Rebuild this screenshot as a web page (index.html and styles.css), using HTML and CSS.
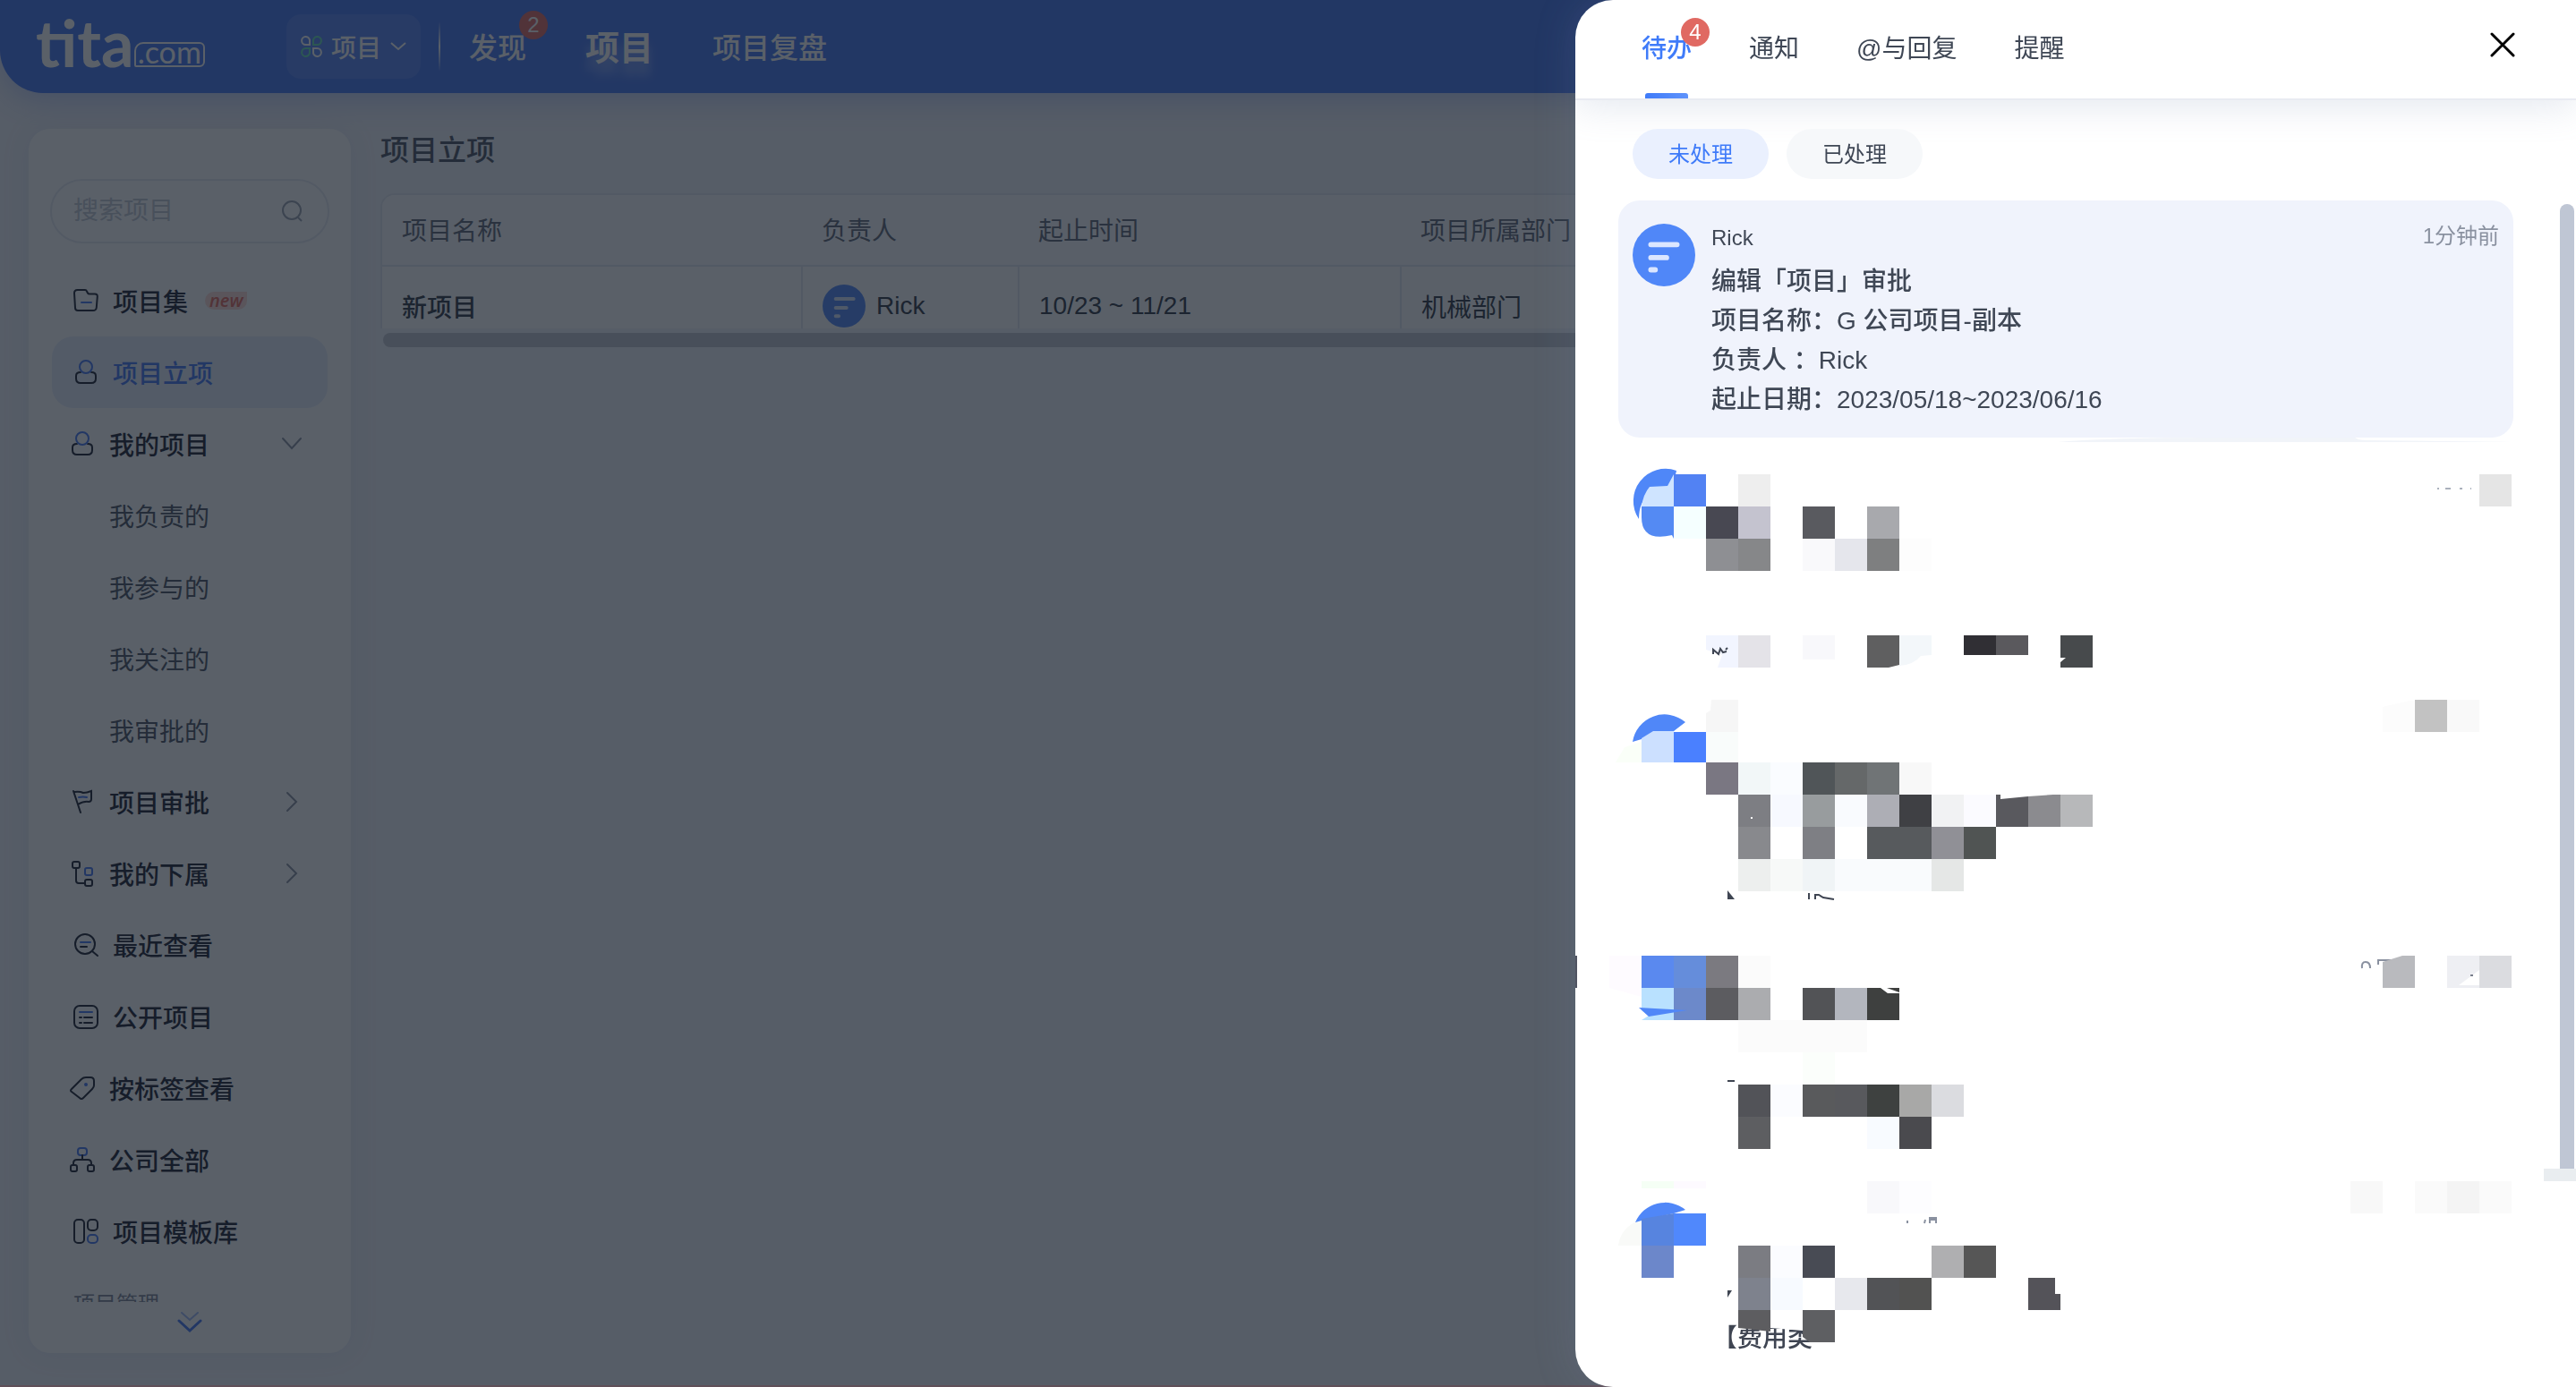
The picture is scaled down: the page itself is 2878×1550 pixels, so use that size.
FILE: index.html
```html
<!DOCTYPE html>
<html lang="zh-CN">
<head>
    <meta charset="UTF-8">
    <meta name="viewport" content="width=device-width, initial-scale=1.0">
    <title>项目立项</title>
    <link rel="stylesheet" href="styles.css">
</head>
<body>
    <div class="app">
        <header class="topbar">
            <a class="logo" href="#"><span class="logo-name">tita</span><span class="logo-com">.com</span></a>
            <button class="switcher">
                <svg width="24" height="26" viewBox="0 0 24 26" fill="none" stroke-width="2">
                    <path class="w" d="M10 11V5.500A4.500 4.500 0 1 0 5.500 11z"/>
                    <path class="g" d="M14 11V5.500A4.500 4.500 0 1 1 18.500 11z"/>
                    <path class="g" d="M10 15v5.500A4.500 4.500 0 1 1 5.500 15z"/>
                    <path class="w" d="M14 15v5.500A4.500 4.500 0 1 0 18.500 15z"/>
                </svg>
                项目
                <svg width="18" height="10" viewBox="0 0 18 10" fill="none" stroke-width="2"><path class="w" d="M1 1l8 7 8-7"/></svg>
            </button>
            <span class="divider"></span>
            <nav class="topnav">
                <a href="#">发现<span class="badge">2</span></a>
                <a href="#" class="current">项目</a>
                <a href="#">项目复盘</a>
            </nav>
        </header>

        <div class="content">
            <aside class="sidebar">
                <div class="search">
                    <input type="text" placeholder="搜索项目" aria-label="搜索项目">
                    <svg width="26" height="26" viewBox="0 0 26 26" fill="none" stroke="#9aa1b0" stroke-width="2"><circle cx="12" cy="12" r="10"/><path d="M19 20l4 4"/></svg>
                </div>
                <nav class="menu">
                    <a href="#">
                        <svg viewBox="0 0 28 28"><path d="M1 5.500Q1 2 4.500 2h8.500q1.500 0 2 1.500l1 2q.5 1 2 1H24q3 0 2.800 3l-1 12q-.3 3.500-3.800 3.500H5q-3 0-3-3z"/><path class="b" d="M9 16h11"/></svg>
                        项目集 <span class="new">new</span>
                    </a>
                    <a href="#" class="active">
                        <svg viewBox="0 0 28 28"><path d="M8 14q-5 0-5 4v3q0 5 5 5h12q5 0 5-5v-3q0-4-5-4"/><circle class="b" cx="14" cy="8" r="7"/></svg>
                        项目立项
                    </a>
                    <a href="#" class="group">
                        <svg viewBox="0 0 28 28"><path d="M8 14q-5 0-5 4v3q0 5 5 5h12q5 0 5-5v-3q0-4-5-4"/><circle class="b" cx="14" cy="8" r="7"/></svg>
                        我的项目
                        <svg class="arrow" viewBox="0 0 28 28"><path d="M4 8l10 11L24 8"/></svg>
                    </a>
                    <a href="#" class="child">我负责的</a>
                    <a href="#" class="child">我参与的</a>
                    <a href="#" class="child">我关注的</a>
                    <a href="#" class="child">我审批的</a>
                    <a href="#" class="group">
                        <svg viewBox="0 0 28 28"><path d="M4 2l8 24M5 3q6-1 10 1 4 0 9-2v9q0 3-3 3-5-1-12 3"/><path class="b" d="M10 9q5-1 9 0"/></svg>
                        项目审批
                        <svg class="arrow" viewBox="0 0 28 28"><path d="M9 4l10 10L9 24"/></svg>
                    </a>
                    <a href="#" class="group">
                        <svg viewBox="0 0 28 28"><rect x="3" y="1" width="8" height="7" rx="2"/><path d="M7 8v14q0 3 3 3h6"/><rect x="17" y="21" width="8" height="7" rx="2"/><rect class="b" x="17" y="8" width="8" height="8" rx="2"/></svg>
                        我的下属
                        <svg class="arrow" viewBox="0 0 28 28"><path d="M9 4l10 10L9 24"/></svg>
                    </a>
                    <a href="#">
                        <svg viewBox="0 0 28 28"><circle cx="13" cy="13" r="11"/><path d="M21 21l6 5"/><path class="b" d="M8 11h11"/><path d="M8 16h7"/></svg>
                        最近查看
                    </a>
                    <a href="#">
                        <svg viewBox="0 0 28 28"><rect x="1" y="2" width="26" height="25" rx="6"/><path class="b" d="M7 9h14"/><path d="M7 15h2M12 15h9M7 21h2M12 21h9"/></svg>
                        公开项目
                    </a>
                    <a href="#" class="group">
                        <svg viewBox="0 0 28 28"><path d="M2 15L13 4q2-2 5-2h5q4 0 4 4v5q0 2-2 4L15 25q-2 2-4 0l-9-7q-2-1 0-3z"/><circle class="b dot" cx="18" cy="10" r="1"/></svg>
                        按标签查看
                    </a>
                    <a href="#" class="group">
                        <svg viewBox="0 0 28 28"><rect class="b" x="9" y="1" width="10" height="8" rx="3"/><path d="M14 9v5M4 20v-2q0-4 4-4h12q4 0 4 4v2"/><rect x="1" y="20" width="7" height="7" rx="2"/><rect x="20" y="20" width="7" height="7" rx="2"/></svg>
                        公司全部
                    </a>
                    <a href="#">
                        <svg viewBox="0 0 28 28"><rect x="1" y="1" width="11" height="26" rx="4"/><rect x="16" y="1" width="11" height="12" rx="4"/><rect class="b" x="16" y="18" width="11" height="9" rx="4"/></svg>
                        项目模板库
                    </a>
                    <p class="menu-label">项目管理</p>
                </nav>
                <button class="more" aria-label="展开更多">
                    <svg width="28" height="26" viewBox="0 0 28 26" fill="none" stroke="#4475f2" stroke-linecap="round"><path d="M5 2l9 8 9-8" stroke-width="2" opacity=".5"/><path d="M2 11l12 11L26 11" stroke-width="3"/></svg>
                </button>
            </aside>

            <main class="main">
                <h1>项目立项</h1>
                <div class="table-wrap">
                    <table>
                        <thead>
                            <tr>
                                <th class="col-name">项目名称</th>
                                <th class="col-owner">负责人</th>
                                <th class="col-date">起止时间</th>
                                <th>项目所属部门</th>
                            </tr>
                        </thead>
                        <tbody>
                            <tr>
                                <td class="strong">新项目</td>
                                <td>
                                    <div class="owner">
                                        <svg width="48" height="48" viewBox="0 0 72 72"><circle cx="36" cy="36" r="36" fill="#5087f8"/><path d="M22 24h30M22 39h18M22 53h5" stroke="#dbe6ff" stroke-width="6" stroke-linecap="round"/></svg>
                                        Rick
                                    </div>
                                </td>
                                <td>10/23 ~ 11/21</td>
                                <td>机械部门</td>
                            </tr>
                        </tbody>
                    </table>
                </div>
                <div class="hscroll"></div>
            </main>
        </div>
    </div>

    <div class="mask"></div>

    <section class="drawer">
        <div class="drawer-head">
            <div class="tabs">
                <button class="selected">待办<span class="badge">4</span></button>
                <button>通知</button>
                <button>@与回复</button>
                <button>提醒</button>
            </div>
            <button class="close" aria-label="关闭">
                <svg width="28" height="28" viewBox="0 0 28 28" stroke="#000" stroke-width="3" stroke-linecap="round"><path d="M2 2l24 24M26 2L2 26"/></svg>
            </button>
        </div>
        <div class="filters">
            <button class="on">未处理</button>
            <button>已处理</button>
        </div>

        <article class="card">
            <svg class="avatar" viewBox="0 0 72 72"><circle cx="36" cy="36" r="36" fill="#5087f8"/><path d="M21 24h30M21 39h18M21 53h5" stroke="#dbe6ff" stroke-width="6" stroke-linecap="round"/></svg>
            <div class="card-body">
                <div class="card-top"><span>Rick</span><time>1分钟前</time></div>
                <p><b>编辑「项目」审批</b></p>
                <p><b>项目名称：</b>G <b>公司项目-副本</b></p>
                <p><b>负责人 ：</b>Rick</p>
                <p><b>起止日期：</b>2023/05/18~2023/06/16</p>
            </div>
        </article>

        <!-- masked messages, cells are 36px -->
        <svg class="masked" viewBox="10 489 1118 275">
            <path d="M549 494q60-5 170-5h162q4 3 12 3l164 2z" fill="#f1f4f9"/>
            <path d="M81 580a36 36 0 0 1 42-54l-4 17-26 3v5q-12 10-12 29z" fill="#4f87f8"/>
            <path d="M93 544l20-1 7-13v36H84q2-14 9-22z" fill="#cfe4ff"/>
            <path d="M84 566h36v36l-2-4q-34 8-34-20z" fill="#548af3"/>
            <path d="M120 530h36v36h-36z" fill="#5282f3"/>
            <path d="M120 566h36v36h-36z" fill="#f5ffff"/>
            <path d="M192 530h36v36h-36z" fill="#eeeeee"/>
            <path d="M1020 530h36v36h-36z" fill="#e5e5e5"/>
            <path d="M973 546h2M982 546h6M998 546h3M1010 546h1" stroke="#aab0bc" stroke-width="2"/>
            <path d="M156 566h36v36h-36z" fill="#484852"/>
            <path d="M192 566h36v36h-36z" fill="#c4c3cf"/>
            <path d="M264 566h36v36h-36z" fill="#595a5f"/>
            <path d="M336 566h36v36h-36z" fill="#a8a9ad"/>
            <path d="M156 602h36v36h-36z" fill="#8e8f93"/>
            <path d="M192 602h36v36h-36z" fill="#868789"/>
            <path d="M264 602h36v36h-36z" fill="#f9f9fb"/>
            <path d="M300 602h36v36h-36z" fill="#e5e6ec"/>
            <path d="M336 602h36v36h-36z" fill="#7e7f80"/>
            <path d="M372 602h36v36h-36z" fill="#fdfdfd"/>
            <path d="M156 710h36v36h-23l5-14-18-6z" fill="#f2f5ff"/>
            <path d="M164 731v-5l6 5 2-6 3 4 4-1M178 726l2-2" fill="none" stroke="#3f4552" stroke-width="2"/>
            <path d="M192 710h36v36h-36z" fill="#e4e3e8"/>
            <path d="M264 710h36v27h-36z" fill="#f8f8fb"/>
            <path d="M336 710h36v33l-12 3h-24z" fill="#5f5f60"/>
            <path d="M372 710h36v22l-12 1q-8 10-24 11z" fill="#f3f7fa"/>
            <path d="M444 710h36v22h-36z" fill="#302f34"/>
            <path d="M480 710h36v22h-36z" fill="#5a595d"/>
            <path d="M552 710h36v36h-36v-6l6-5h-6z" fill="#474a4c"/>
        </svg>
        <svg class="masked" viewBox="10 764 1118 275">
            <path d="M55 852l10-17 19-6v23z" fill="#fafff8"/>
            <path d="M74 829a36 36 0 0 1 59-22l-13 10-36 9z" fill="#5087f8"/>
            <path d="M84 825l13-8h23v35H84z" fill="#cce0ff"/>
            <path d="M120 818h36v34h-36z" fill="#4a80ff"/>
            <path d="M162 782h30v36h-36v-21l5-3z" fill="#f6f6f6"/>
            <path d="M156 818h36v34h-36z" fill="#f9fcfb"/>
            <path d="M948 782h36v36h-36z" fill="#c2c2c2"/>
            <path d="M984 782h36v36h-36z" fill="#f9f9f9"/>
            <path d="M912 790l30-7h6v35h-36z" fill="#fcfcfc"/>
            <path d="M156 852h36v36h-36z" fill="#7a7782"/>
            <path d="M192 852h36v36h-36z" fill="#f2f7f8"/>
            <path d="M228 852h36v36h-36z" fill="#fafcff"/>
            <path d="M264 852h36v36h-36z" fill="#505558"/>
            <path d="M300 852h36v36h-36z" fill="#656869"/>
            <path d="M336 852h36v36h-36z" fill="#707476"/>
            <path d="M372 852h36v36h-36z" fill="#f8f8f8"/>
            <path d="M192 888h36v36h-36z" fill="#7d7e83"/>
            <path d="M206 914h2" stroke="#fff" stroke-width="2"/>
            <path d="M228 888h36v36h-36z" fill="#f7f9ff"/>
            <path d="M264 888h36v36h-36z" fill="#989c9e"/>
            <path d="M300 888h36v36h-36z" fill="#f9fbfe"/>
            <path d="M336 888h36v36h-36z" fill="#adaeb5"/>
            <path d="M372 888h36v36h-36z" fill="#3f4044"/>
            <path d="M408 888h36v36h-36z" fill="#f1f2f3"/>
            <path d="M444 888h36v36h-36z" fill="#fbfbff"/>
            <path d="M480 888h5v5l31-3v34h-36z" fill="#59595e"/>
            <path d="M516 890l28-2h8v36h-36z" fill="#8b8b8f"/>
            <path d="M552 888h36v36h-36z" fill="#b7b8ba"/>
            <path d="M192 924h36v36h-36z" fill="#88898d"/>
            <path d="M264 924h36v36h-36z" fill="#7e7f84"/>
            <path d="M336 924h72v36h-72z" fill="#575a5d"/>
            <path d="M408 924h36v36h-36z" fill="#909096"/>
            <path d="M444 924h36v36h-36z" fill="#505453"/>
            <path d="M192 960h36v36h-36z" fill="#edefee"/>
            <path d="M228 960h36v36h-36z" fill="#f7f9f8"/>
            <path d="M264 960h36v36h-36z" fill="#f0f4f6"/>
            <path d="M300 960h108v36H300z" fill="#f9fbfd"/>
            <path d="M408 960h36v36h-36z" fill="#e5e7e6"/>
            <path d="M180 995l8 10h-8z" fill="#3f4552"/>
            <path d="M271 998v7M278 1005v-5h4l5 3 12 2" fill="none" stroke="#3f4552" stroke-width="2"/>
        </svg>
        <svg class="masked" viewBox="10 1039 1118 275">
            <path d="M10 1068h2v36h-2z" fill="#505462"/>
            <path d="M48 1068h36v46l-36-10z" fill="#fefbff"/>
            <path d="M84 1068h36v36H84z" fill="#5a89ef"/>
            <path d="M120 1068h36v36h-36z" fill="#658ddb"/>
            <path d="M156 1068h36v36h-36z" fill="#7b7a80"/>
            <path d="M192 1068h36v36h-36z" fill="#fbfbfb"/>
            <path d="M84 1104h36v36H84z" fill="#b9e1ff"/>
            <path d="M120 1104h36v36h-36z" fill="#6c89ca"/>
            <path d="M84 1129v11l8-5z" fill="#fff"/>
            <path d="M81 1126l54 3-43 7z" fill="#5087f8"/>
            <path d="M156 1104h36v36h-36z" fill="#5c5c60"/>
            <path d="M192 1104h36v36h-36z" fill="#abacaf"/>
            <path d="M264 1104h36v36h-36z" fill="#525356"/>
            <path d="M300 1104h36v36h-36z" fill="#b3b6be"/>
            <path d="M336 1104h15l8 6h13v30h-36zM358 1104h14v5z" fill="#3e403f"/>
            <path d="M889 1082q-1-7 4-7t5 7M907 1078v-5h14" fill="none" stroke="#8a91a0" stroke-width="2"/>
            <path d="M912 1075l22-7h14v36h-36z" fill="#b9babe"/>
            <path d="M984 1068h36v16l-23 17h23v3h-36z" fill="#eeeff3"/>
            <path d="M1020 1068h36v36h-36z" fill="#dbdce0"/>
            <path d="M1010 1090h3" stroke="#777d8b" stroke-width="2"/>
            <path d="M192 1140h144v36H192z" fill="#fbfbfb"/>
            <path d="M264 1176h36v36h-36z" fill="#fbfefb"/>
            <path d="M180 1208h8" stroke="#3f4552" stroke-width="2"/>
            <path d="M192 1212h36v36h-36z" fill="#525358"/>
            <path d="M228 1212h36v36h-36z" fill="#fbfcff"/>
            <path d="M264 1212h36v36h-36z" fill="#595a5c"/>
            <path d="M300 1212h36v36h-36z" fill="#58595d"/>
            <path d="M336 1212h36v36h-36z" fill="#3e4140"/>
            <path d="M372 1212h36v36h-36z" fill="#a8a8a7"/>
            <path d="M408 1212h36v36h-36z" fill="#dbdce0"/>
            <path d="M192 1248h36v36h-36z" fill="#5d5e61"/>
            <path d="M336 1248h36v36h-36z" fill="#f8fbff"/>
            <path d="M372 1248h36v36h-36z" fill="#4a4a4e"/>
        </svg>
        <svg class="masked" viewBox="10 1314 1118 200">
            <path d="M84 1320h36v8H84z" fill="#f5fff5"/>
            <path d="M120 1320h36v8h-36z" fill="#fdfaff"/>
            <path d="M336 1320h36v36h-36z" fill="#f8f8fb"/>
            <path d="M372 1320h36v36h-36z" fill="#fdfdff"/>
            <path d="M876 1320h36v36h-36z" fill="#f8f8f8"/>
            <path d="M948 1320h36v36h-36zM1056 1320h-36v36h36z" fill="#fafafa"/>
            <path d="M984 1320h36v36h-36z" fill="#f4f4f4"/>
            <path d="M58 1392q2-17 18-26l8-2v28z" fill="#f9faf8"/>
            <path d="M77 1366a36 36 0 0 1 56-14l-13 4-36 8z" fill="#5087f8"/>
            <path d="M84 1362l36-6v36H84z" fill="#5784df"/>
            <path d="M120 1356h36v36h-36z" fill="#5088fc"/>
            <path d="M84 1392h36v36H84z" fill="#6c87ca"/>
            <path d="M381 1367v-3M400 1367l1-4M406 1367v-6h7v6M406 1363h7" fill="none" stroke="#8a91a0" stroke-width="2"/>
            <path d="M192 1392h36v36h-36z" fill="#7b7c82"/>
            <path d="M228 1392h36v36h-36z" fill="#fbfcff"/>
            <path d="M264 1392h36v36h-36z" fill="#484b54"/>
            <path d="M408 1392h36v36h-36z" fill="#afafb1"/>
            <path d="M444 1392h36v36h-36z" fill="#565656"/>
            <path d="M180 1442h5l-5 8z" fill="#3f4552"/>
            <path d="M192 1428h36v36h-36z" fill="#7e828d"/>
            <path d="M228 1428h36v36h-36z" fill="#f7faff"/>
            <path d="M300 1428h36v36h-36z" fill="#e7e8ed"/>
            <path d="M336 1428h36v36h-36z" fill="#525356"/>
            <path d="M372 1428h36v36h-36z" fill="#525251"/>
            <path d="M516 1428h30v18h6v18h-36z" fill="#545359"/>
            <text class="peek" x="163" y="1505">【费用类</text>
            <path d="M264 1464h20v24l-20-1-36-3v-20z" fill="#fff"/>
            <path d="M192 1464h36v24l-36-4z" fill="#5d5d60"/>
            <path d="M264 1464h36v36h-28l-8-6z" fill="#5e5f62"/>
        </svg>
        <div class="vscroll"></div>
    </section>
</body>
</html>
```
FILE: styles.css
```css
* {
    box-sizing: border-box;
}

body {
    margin: 0;
    height: 100vh;
    overflow: hidden;
    font-family: "Liberation Sans", "Noto Sans CJK SC", sans-serif;
    font-size: 28px;
    color: #3f4755;
}

button, input {
    font: inherit;
    color: inherit;
    border: none;
    background: none;
    padding: 0;
}

a {
    color: inherit;
    text-decoration: none;
}

.app {
    display: flex;
    flex-direction: column;
    height: 100vh;
    background: #f1f3fa;
}

/* top bar */
.topbar {
    display: flex;
    align-items: center;
    height: 104px;
    padding: 0 40px;
    background: #4475f2;
    border-bottom-left-radius: 48px;
    box-shadow: 0 8px 32px rgba(70, 111, 240, 0.3);
    color: #fff;
}

.logo {
    display: flex;
    align-items: flex-end;
    width: 280px;
    height: 46px;
    font-family: Lato, sans-serif;
}

.logo-name {
    font-size: 72px;
    font-weight: bold;
    line-height: 56px;
}

.logo-com {
    border: 2px solid #fff;
    border-radius: 10px 6px 6px 2px;
    padding: 0 2px;
    height: 28px;
    font-size: 34px;
    line-height: 18px;
}

.switcher {
    display: flex;
    align-items: center;
    gap: 10px;
    height: 72px;
    padding: 0 16px;
    border-radius: 16px;
    background: rgba(255, 255, 255, 0.1);
    font-weight: 500;
}

.switcher .w {
    stroke: #fff;
}

.switcher .g {
    stroke: #67e0b5;
}

.divider {
    width: 2px;
    height: 56px;
    margin: 0 32px 0 20px;
    background: linear-gradient(transparent, #fff, transparent);
}

.topnav {
    display: flex;
    align-items: center;
    gap: 66px;
    padding-bottom: 3px;
    font-size: 32px;
    font-weight: 500;
}

.topnav a {
    position: relative;
}

.topnav .current {
    font-size: 38px;
    font-weight: bold;
    text-shadow: 0 14px 12px rgba(255, 255, 255, 0.4);
}

.badge {
    position: absolute;
    top: -16px;
    right: -24px;
    width: 32px;
    height: 32px;
    border-radius: 50%;
    background: #e06962;
    color: #fff;
    font-size: 24px;
    font-weight: normal;
    line-height: 32px;
    text-align: center;
}

.content {
    display: flex;
    flex: 1;
    min-height: 0;
    gap: 33px;
    padding: 40px 0 38px 32px;
}

/* sidebar */
.sidebar {
    display: flex;
    flex-direction: column;
    width: 360px;
    padding: 56px 24px 0;
    border-radius: 24px;
    background: #fff;
    box-shadow: 0 0 32px rgba(127, 145, 180, 0.1);
}

.search {
    display: flex;
    align-items: center;
    height: 72px;
    margin-bottom: 24px;
    padding: 0 26px 0 24px;
    border: 2px solid #e6e9f2;
    border-radius: 36px;
}

.search input {
    flex: 1;
    min-width: 0;
}

.search input::placeholder {
    color: #c4c8d2;
}

.menu {
    flex: 1;
    min-height: 0;
    overflow: hidden;
    padding: 0 2px;
    color: #1b2130;
}

.menu a {
    display: flex;
    align-items: center;
    gap: 16px;
    height: 80px;
    padding: 0 26px 0 24px;
    border-radius: 24px;
    font-weight: 500;
}

.menu a.group {
    padding-left: 20px;
}

.menu a.child {
    padding-left: 64px;
    font-weight: normal;
    color: #4a5261;
}

.menu a.active {
    background: #e6edfc;
    color: #4475f2;
}

.menu svg {
    width: 28px;
    height: 28px;
    overflow: visible;
    fill: none;
    stroke: #1b2130;
    stroke-width: 2;
    stroke-linecap: round;
}

.menu .b {
    stroke: #4475f2;
}

.menu .dot {
    fill: #4475f2;
}

.menu .arrow {
    margin-left: auto;
    stroke: #8a91a0;
}

.new {
    margin-left: 3px;
    padding: 0 5px;
    border-radius: 10px 0 10px 10px;
    background: #ffd9d4;
    color: #e5685c;
    font-family: "Open Sans", sans-serif;
    font-size: 20px;
    font-style: italic;
    font-weight: 600;
    line-height: 20px;
}

.menu-label {
    margin: 0;
    padding-left: 24px;
    font-size: 24px;
    line-height: 84px;
    color: #7d8494;
}

.more {
    height: 57px;
    padding-bottom: 4px;
}

/* project table */
.main {
    flex: 1;
    min-width: 0;
}

h1 {
    margin: 0 0 24px;
    font-size: 32px;
    font-weight: 500;
    line-height: 48px;
    color: #4a5261;
}

.table-wrap {
    height: 151px;
    overflow: hidden;
    border: 2px solid #e4e8f1;
    border-bottom: none;
    border-top-left-radius: 16px;
    background: #fff;
}

table {
    width: 100%;
    table-layout: fixed;
    border-collapse: collapse;
}

th, td {
    padding: 0 0 2px 22px;
    text-align: left;
}

th {
    height: 79px;
    border-bottom: 2px solid #e4e8f1;
    background: #fafbfd;
    color: #5f6675;
    font-weight: normal;
}

td {
    height: 90px;
    color: #2f3644;
}

td + td {
    border-left: 2px solid #e4e8f1;
}

.col-name {
    width: 469px;
}

.col-owner {
    width: 242px;
}

.col-date {
    width: 427px;
}

.strong {
    font-weight: 500;
}

.owner {
    display: flex;
    align-items: center;
    gap: 12px;
}

.hscroll {
    height: 16px;
    margin: 5px 0 0 3px;
    border-radius: 8px;
    background: #c3c7d1;
}

.mask {
    position: fixed;
    inset: 0;
    background: rgba(20, 28, 40, 0.7);
    border-bottom: 2px solid rgba(110, 60, 70, 0.4);
}

/* message drawer */
.drawer {
    position: fixed;
    top: 0;
    right: 0;
    bottom: 0;
    width: 1118px;
    max-width: 100%;
    overflow: hidden;
    border-radius: 42px 0 0 42px;
    background: #fff;
    box-shadow: 0 0 48px rgba(127, 145, 180, 0.2);
}

.drawer-head {
    display: flex;
    justify-content: space-between;
    height: 112px;
    padding: 0 68px 0 74px;
    border-bottom: 2px solid #e9ebf2;
    box-shadow: 0 8px 40px rgba(127, 145, 180, 0.2);
}

.tabs {
    display: flex;
    gap: 64px;
}

.tabs button {
    position: relative;
    height: 110px;
    padding-bottom: 6px;
}

.tabs .selected {
    color: #3f7bf9;
    font-weight: 500;
}

.tabs .selected::after {
    content: "";
    position: absolute;
    left: 4px;
    bottom: 0;
    width: 48px;
    height: 6px;
    border-radius: 3px 3px 0 0;
    background: linear-gradient(90deg, #3f7bf9, #5f93fb);
}

.tabs .badge {
    top: 20px;
    right: -20px;
}

.close {
    height: 106px;
}

.filters {
    display: flex;
    gap: 20px;
    padding: 32px 64px 24px;
}

.filters button {
    width: 152px;
    height: 56px;
    padding-bottom: 4px;
    border-radius: 28px;
    background: #f6f8fa;
    font-size: 24px;
}

.filters .on {
    background: #eaf0fe;
    color: #3f7bf9;
}

.card {
    display: flex;
    gap: 18px;
    margin: 0 70px 0 48px;
    padding: 26px 16px 20px;
    border-radius: 24px;
    background: #f0f3fc;
}

.avatar {
    width: 70px;
    height: 70px;
}

.card-body {
    flex: 1;
}

.card-top {
    display: flex;
    justify-content: space-between;
    height: 43px;
    font-size: 24px;
    line-height: 32px;
}

.card-top time {
    color: #8a91a0;
    line-height: 28px;
}

.card p {
    margin: 0;
    line-height: 44px;
}

.card b {
    font-weight: 500;
}

.masked {
    display: block;
    width: 100%;
}

.peek {
    font-size: 28px;
    font-weight: 500;
    fill: #3f4552;
}

.vscroll {
    position: absolute;
    top: 228px;
    right: 2px;
    width: 16px;
    height: 1080px;
    border-radius: 8px 8px 0 0;
    background: #bfc6d4;
}

.vscroll::after {
    content: "";
    position: absolute;
    top: 1078px;
    right: -2px;
    width: 36px;
    height: 14px;
    background: #e9edf0;
}
```
